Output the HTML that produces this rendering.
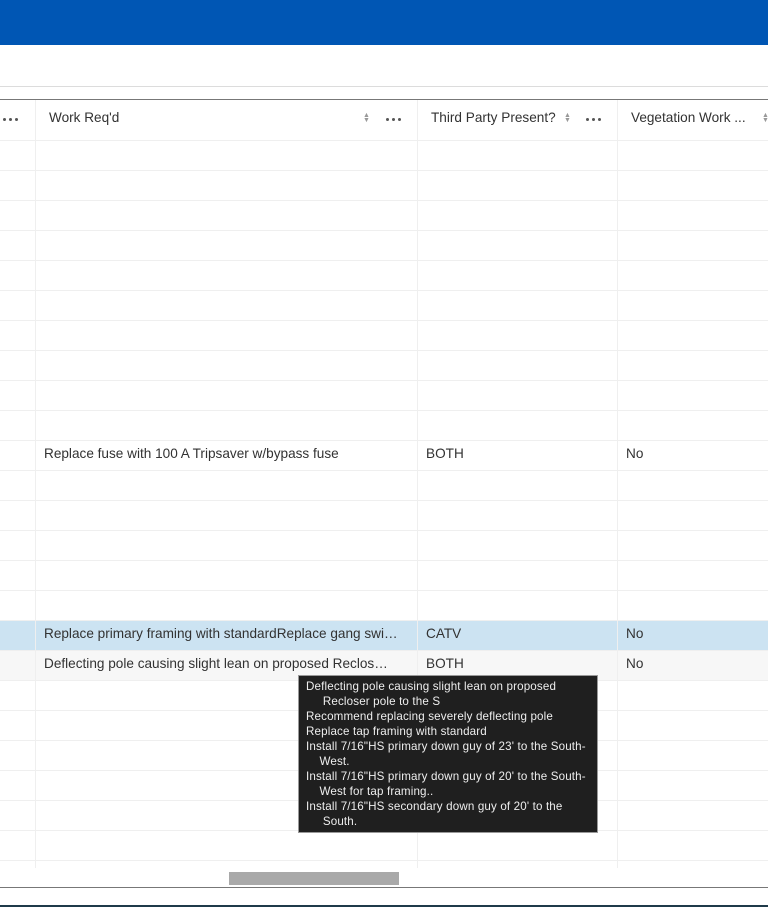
<!DOCTYPE html>
<html><head><style>
*{margin:0;padding:0;box-sizing:border-box}
body{width:768px;height:907px;overflow:hidden;background:#fff;font-family:"Liberation Sans",sans-serif;position:relative;color:#323232}
.a{position:absolute}
.hl{position:absolute;left:0;width:768px;height:1px;background:#efefef}
.vl{position:absolute;top:100px;width:1px;height:770px;background:#efefef}
.t{position:absolute;font-size:13.6px;white-space:nowrap;line-height:30px}
.dots{position:absolute;width:16px;height:3px}
.dots i{position:absolute;top:0;width:3px;height:3px;border-radius:50%;background:#555}
.sort{position:absolute;font-size:7px;color:#999;line-height:5px}
</style></head><body>
<div class="a" style="left:0;top:0;width:768px;height:45px;background:#0056b4"></div>
<div class="a" style="left:0;top:86px;width:768px;height:1px;background:#dcdcdc"></div>
<div class="a" style="left:0;top:99px;width:768px;height:1px;background:#777"></div>
<div class="a" style="left:0;top:620px;width:768px;height:30px;background:#cce3f2"></div>
<div class="a" style="left:0;top:650px;width:768px;height:30px;background:#f7f7f7"></div>
<div class="hl" style="top:140px"></div><div class="hl" style="top:170px"></div><div class="hl" style="top:200px"></div><div class="hl" style="top:230px"></div><div class="hl" style="top:260px"></div><div class="hl" style="top:290px"></div><div class="hl" style="top:320px"></div><div class="hl" style="top:350px"></div><div class="hl" style="top:380px"></div><div class="hl" style="top:410px"></div><div class="hl" style="top:440px"></div><div class="hl" style="top:470px"></div><div class="hl" style="top:500px"></div><div class="hl" style="top:530px"></div><div class="hl" style="top:560px"></div><div class="hl" style="top:590px"></div><div class="hl" style="top:620px"></div><div class="hl" style="top:650px"></div><div class="hl" style="top:680px"></div><div class="hl" style="top:710px"></div><div class="hl" style="top:740px"></div><div class="hl" style="top:770px"></div><div class="hl" style="top:800px"></div><div class="hl" style="top:830px"></div><div class="hl" style="top:860px"></div>
<div class="vl" style="left:35px"></div><div class="vl" style="left:417px"></div><div class="vl" style="left:617px"></div>
<div class="dots" style="left:3px;top:118px"><i style="left:0"></i><i style="left:6px"></i><i style="left:12px"></i></div>
<div class="t" style="left:49px;top:103px">Work Req'd</div>
<div class="sort" style="left:363px;top:113px">▲<br>▼</div>
<div class="dots" style="left:386px;top:118px"><i style="left:0"></i><i style="left:6px"></i><i style="left:12px"></i></div>
<div class="t" style="left:431px;top:103px">Third Party Present?</div>
<div class="sort" style="left:564px;top:113px">▲<br>▼</div>
<div class="dots" style="left:586px;top:118px"><i style="left:0"></i><i style="left:6px"></i><i style="left:12px"></i></div>
<div class="t" style="left:631px;top:103px">Vegetation Work ...</div>
<div class="sort" style="left:762px;top:113px">▲<br>▼</div>
<div class="t" style="left:44px;top:439px">Replace fuse with 100 A Tripsaver w/bypass fuse</div>
<div class="t" style="left:426px;top:439px">BOTH</div>
<div class="t" style="left:626px;top:439px">No</div>
<div class="t" style="left:44px;top:619px">Replace primary framing with standardReplace gang swi…</div>
<div class="t" style="left:426px;top:619px">CATV</div>
<div class="t" style="left:626px;top:619px">No</div>
<div class="t" style="left:44px;top:649px">Deflecting pole causing slight lean on proposed Reclos…</div>
<div class="t" style="left:426px;top:649px">BOTH</div>
<div class="t" style="left:626px;top:649px">No</div>
<div class="t" style="left:44px;top:859px">Reposition the recloser framing for clearance</div>
<div class="t" style="left:426px;top:859px">BOTH</div>
<div class="t" style="left:626px;top:859px">No</div>
<div class="a" style="left:0;top:868px;width:768px;height:19px;background:#fff"></div>
<div class="a" style="left:229px;top:872px;width:170px;height:13px;background:#a9a9a9"></div>
<div class="a" style="left:0;top:887px;width:768px;height:1px;background:#777"></div>
<div class="a" style="left:0;top:905px;width:768px;height:2px;background:#1f3a4a"></div>
<div class="a" style="left:298px;top:675px;width:300px;height:158px;background:#1f1f1f;border:1px solid #999;color:#eee;font-size:11.6px;letter-spacing:0.15px;line-height:15px;padding:3px 0 0 7px;white-space:nowrap">
Deflecting pole causing slight lean on proposed<br>&nbsp;&nbsp;&nbsp;&nbsp;&nbsp;Recloser pole to the S<br>Recommend replacing severely deflecting pole<br>Replace tap framing with standard<br>Install 7/16"HS primary down guy of 23' to the South-<br>&nbsp;&nbsp;&nbsp;&nbsp;West.<br>Install 7/16"HS primary down guy of 20' to the South-<br>&nbsp;&nbsp;&nbsp;&nbsp;West for tap framing..<br>Install 7/16"HS secondary down guy of 20' to the<br>&nbsp;&nbsp;&nbsp;&nbsp;&nbsp;South.
</div>
</body></html>
